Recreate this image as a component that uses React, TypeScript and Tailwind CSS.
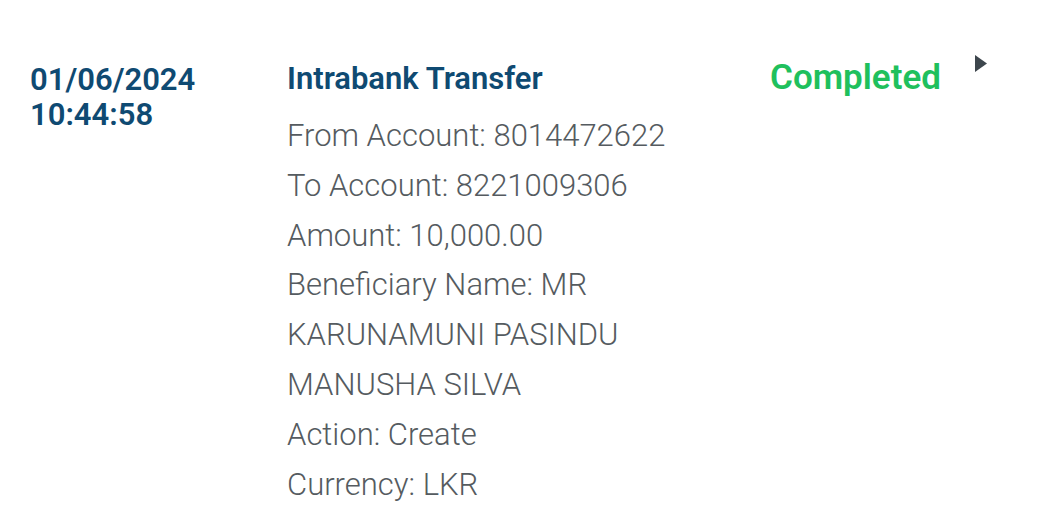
export default function App() {
    const details = [
        "From Account: 8014472622",
        "To Account: 8221009306",
        "Amount: 10,000.00",
        "Beneficiary Name: MR KARUNAMUNI PASINDU MANUSHA SILVA",
        "Action: Create",
        "Currency: LKR",
    ];

    return (
        <div className="w-[1056px] h-[532px] bg-white overflow-hidden font-['Roboto',sans-serif]">
            <div className="flex pt-[60px] pl-[30px]">
                <div className="w-[257px] pt-[2px] text-[31px] leading-[35px] font-semibold text-[#0f4a72]">
                    <div>01/06/2024</div>
                    <div>10:44:58</div>
                </div>
                <div className="w-[483px]">
                    <div className="text-[31px] leading-[38px] font-semibold text-[#0f4a72]">Intrabank Transfer</div>
                    <div className="mt-[13px] w-[400px] text-[31px] leading-[49.8px] font-light text-[#555b60]">
                        {details.map((d) => (
                            <div key={d}>{d}</div>
                        ))}
                    </div>
                </div>
                <div className="text-[35px] leading-[36px] font-semibold text-[#1fc05d]">Completed</div>
                <div className="ml-[33px] mt-[-6px]">
                    <svg width="14" height="19" viewBox="0 0 14 19">
                        <path d="M1 1 L13 9.5 L1 18 Z" fill="#3d464d" />
                    </svg>
                </div>
            </div>
        </div>
    );
}
